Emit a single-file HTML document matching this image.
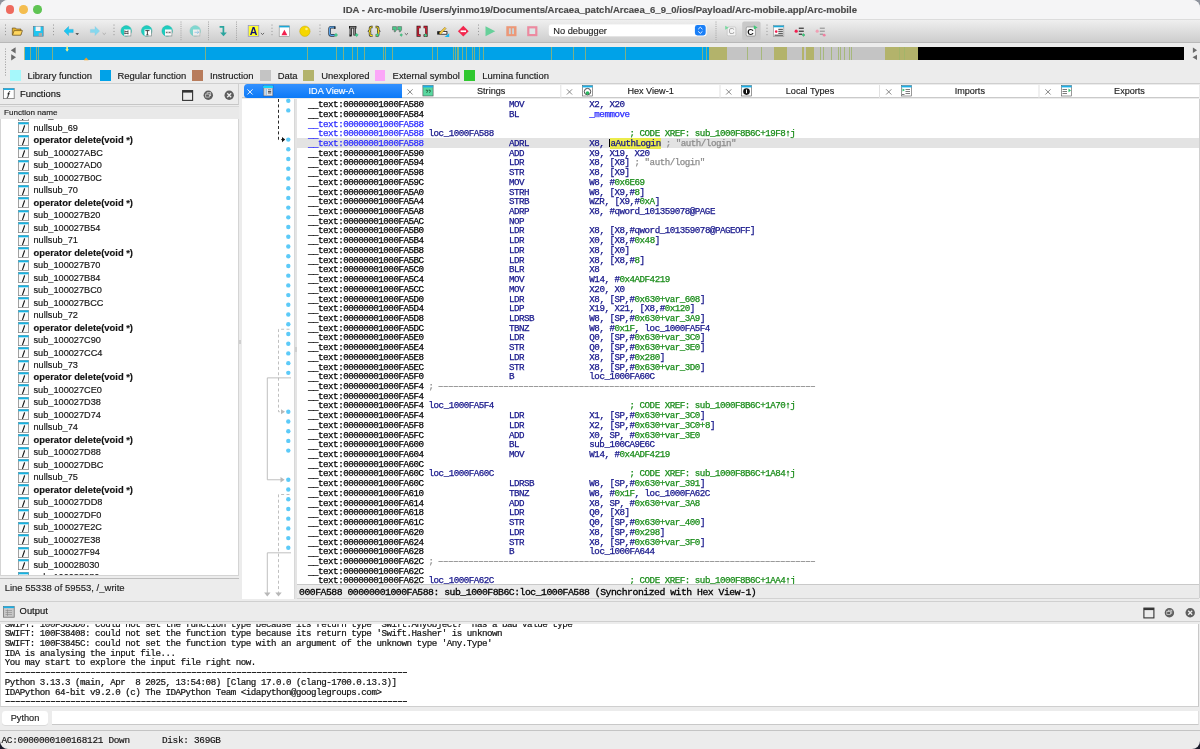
<!DOCTYPE html><html><head><meta charset="utf-8"><style>
*{box-sizing:border-box}
html,body{margin:0;padding:0;width:1200px;height:749px;overflow:hidden;background:linear-gradient(#8e939c 0,#8e939c 50%,#1b1b2b 50%)}
#win{-webkit-text-stroke:0.15px currentColor;will-change:transform;position:absolute;left:0;top:0;width:1200px;height:749px;background:#ececec;border-radius:8px;overflow:hidden;font-family:"Liberation Sans",sans-serif}
.abs{position:absolute}
.cr{position:absolute;left:297px;width:902px;height:9.72px;line-height:9.72px;padding-left:11px;padding-top:1px;font-family:"Liberation Mono",monospace;font-size:9.2px;letter-spacing:-0.49px;white-space:pre;color:#000;-webkit-text-stroke:0.25px currentColor}
.hlb{position:absolute;left:297px;width:902px;height:9.72px;background:#e3e3e3}
.us{position:relative;top:1.3px}
.dash{position:absolute}
.odash{position:absolute;left:4.0px}
.yl{background:#ecec4c}
.cur{display:inline-block;width:0;border-left:1.2px solid #000;height:8.5px;vertical-align:-1.5px;margin-left:0px}
.fr{position:absolute;left:1px;width:237px;height:12.49px}
.fi{position:absolute;left:16.3px;top:1.3px;width:11px;height:11px;line-height:0}
.ft{position:absolute;left:31.5px;top:0.8px;line-height:12.49px;font-size:9.2px;color:#111;white-space:pre}
.ft.b{font-weight:bold;font-size:9.4px}
.tab{position:absolute;top:85px;height:13.5px;font-size:9px;line-height:13.5px;color:#222}
.mono{font-family:"Liberation Mono",monospace}
.ol{position:absolute;left:3.7px;-webkit-text-stroke:0.2px currentColor;height:9.72px;line-height:9.72px;font-family:"Liberation Mono",monospace;font-size:9.2px;letter-spacing:-0.49px;white-space:pre;color:#111}
</style></head><body><div id="win">

<div class="abs" style="left:0;top:0;width:1200px;height:19.5px;background:#f5f5f6;border-bottom:1px solid #dcdcdc"></div>
<div class="abs" style="left:5.5px;top:5.3px;width:8.6px;height:8.6px;border-radius:50%;background:#ee6a5e"></div>
<div class="abs" style="left:19.2px;top:5.3px;width:8.6px;height:8.6px;border-radius:50%;background:#f4bd4f"></div>
<div class="abs" style="left:33.2px;top:5.3px;width:8.6px;height:8.6px;border-radius:50%;background:#5fc453"></div>
<div class="abs" style="left:0;top:3px;width:1200px;text-align:center;font-weight:bold;font-size:9.55px;line-height:13px;color:#4a4a4a;padding-left:0px">IDA - Arc-mobile /Users/yinmo19/Documents/Arcaea_patch/Arcaea_6_9_0/ios/Payload/Arc-mobile.app/Arc-mobile</div>

<div class="abs" style="left:0;top:19.5px;width:1200px;height:23.3px;background:linear-gradient(#efefef,#cdcdcd);border-bottom:1px solid #b8b8b8"></div>
<div style="position:absolute;left:24.5px;top:46.7px;width:684.25px;height:13.5px;background:#00a2e8"></div>
<div style="position:absolute;left:708.75px;top:46.7px;width:18.25px;height:13.5px;background:#b3b36b"></div>
<div style="position:absolute;left:727px;top:46.7px;width:47.00px;height:13.5px;background:#c4c4c4"></div>
<div style="position:absolute;left:774px;top:46.7px;width:13.00px;height:13.5px;background:#b3b36b"></div>
<div style="position:absolute;left:787px;top:46.7px;width:15.00px;height:13.5px;background:#c4c4c4"></div>
<div style="position:absolute;left:802px;top:46.7px;width:1.50px;height:13.5px;background:#b3b36b"></div>
<div style="position:absolute;left:803.5px;top:46.7px;width:2.50px;height:13.5px;background:#c4c4c4"></div>
<div style="position:absolute;left:806px;top:46.7px;width:8.00px;height:13.5px;background:#b3b36b"></div>
<div style="position:absolute;left:814px;top:46.7px;width:71.00px;height:13.5px;background:#c4c4c4"></div>
<div style="position:absolute;left:885px;top:46.7px;width:32.50px;height:13.5px;background:#b3b36b"></div>
<div style="position:absolute;left:917.5px;top:46.7px;width:266.50px;height:13.5px;background:#000"></div>
<div style="position:absolute;left:24.0px;top:46.7px;width:1px;height:13.5px;background:#9fb56a;opacity:.8"></div>
<div style="position:absolute;left:30.0px;top:46.7px;width:1px;height:13.5px;background:#9fb56a;opacity:.8"></div>
<div style="position:absolute;left:36.0px;top:46.7px;width:1px;height:13.5px;background:#9fb56a;opacity:.8"></div>
<div style="position:absolute;left:38.0px;top:46.7px;width:1px;height:13.5px;background:#9fb56a;opacity:.8"></div>
<div style="position:absolute;left:52.0px;top:46.7px;width:1px;height:13.5px;background:#9fb56a;opacity:.8"></div>
<div style="position:absolute;left:205.0px;top:46.7px;width:1px;height:13.5px;background:#9fb56a;opacity:.8"></div>
<div style="position:absolute;left:307.0px;top:46.7px;width:1px;height:13.5px;background:#9fb56a;opacity:.8"></div>
<div style="position:absolute;left:335.5px;top:46.7px;width:1px;height:13.5px;background:#9fb56a;opacity:.8"></div>
<div style="position:absolute;left:342.5px;top:46.7px;width:1px;height:13.5px;background:#9fb56a;opacity:.8"></div>
<div style="position:absolute;left:351.5px;top:46.7px;width:1px;height:13.5px;background:#9fb56a;opacity:.8"></div>
<div style="position:absolute;left:356.5px;top:46.7px;width:1px;height:13.5px;background:#9fb56a;opacity:.8"></div>
<div style="position:absolute;left:364.0px;top:46.7px;width:1px;height:13.5px;background:#9fb56a;opacity:.8"></div>
<div style="position:absolute;left:383.0px;top:46.7px;width:1px;height:13.5px;background:#9fb56a;opacity:.8"></div>
<div style="position:absolute;left:385.0px;top:46.7px;width:1px;height:13.5px;background:#9fb56a;opacity:.8"></div>
<div style="position:absolute;left:392.0px;top:46.7px;width:1px;height:13.5px;background:#9fb56a;opacity:.8"></div>
<div style="position:absolute;left:432.0px;top:46.7px;width:1px;height:13.5px;background:#9fb56a;opacity:.8"></div>
<div style="position:absolute;left:437.0px;top:46.7px;width:1px;height:13.5px;background:#9fb56a;opacity:.8"></div>
<div style="position:absolute;left:452.5px;top:46.7px;width:1px;height:13.5px;background:#9fb56a;opacity:.8"></div>
<div style="position:absolute;left:454.5px;top:46.7px;width:1px;height:13.5px;background:#9fb56a;opacity:.8"></div>
<div style="position:absolute;left:456.5px;top:46.7px;width:1px;height:13.5px;background:#9fb56a;opacity:.8"></div>
<div style="position:absolute;left:457.5px;top:46.7px;width:1px;height:13.5px;background:#9fb56a;opacity:.8"></div>
<div style="position:absolute;left:462.0px;top:46.7px;width:1px;height:13.5px;background:#9fb56a;opacity:.8"></div>
<div style="position:absolute;left:465.5px;top:46.7px;width:1px;height:13.5px;background:#9fb56a;opacity:.8"></div>
<div style="position:absolute;left:471.5px;top:46.7px;width:1px;height:13.5px;background:#9fb56a;opacity:.8"></div>
<div style="position:absolute;left:473.5px;top:46.7px;width:1px;height:13.5px;background:#9fb56a;opacity:.8"></div>
<div style="position:absolute;left:479.0px;top:46.7px;width:1px;height:13.5px;background:#9fb56a;opacity:.8"></div>
<div style="position:absolute;left:482.5px;top:46.7px;width:1px;height:13.5px;background:#9fb56a;opacity:.8"></div>
<div style="position:absolute;left:551.0px;top:46.7px;width:1px;height:13.5px;background:#9fb56a;opacity:.8"></div>
<div style="position:absolute;left:572.5px;top:46.7px;width:1px;height:13.5px;background:#9fb56a;opacity:.8"></div>
<div style="position:absolute;left:585.0px;top:46.7px;width:1px;height:13.5px;background:#9fb56a;opacity:.8"></div>
<div style="position:absolute;left:625.0px;top:46.7px;width:1px;height:13.5px;background:#9fb56a;opacity:.8"></div>
<div style="position:absolute;left:702.0px;top:46.7px;width:1px;height:13.5px;background:#9fb56a;opacity:.8"></div>
<div style="position:absolute;left:705.5px;top:46.7px;width:1px;height:13.5px;background:#9fb56a;opacity:.8"></div>
<div style="position:absolute;left:747.0px;top:46.7px;width:1px;height:13.5px;background:#9fb56a;opacity:.8"></div>
<div style="position:absolute;left:761.0px;top:46.7px;width:1px;height:13.5px;background:#9fb56a;opacity:.8"></div>
<div style="position:absolute;left:819.5px;top:46.7px;width:1px;height:13.5px;background:#9fb56a;opacity:.8"></div>
<div style="position:absolute;left:822.5px;top:46.7px;width:1px;height:13.5px;background:#9fb56a;opacity:.8"></div>
<div style="position:absolute;left:830.5px;top:46.7px;width:1px;height:13.5px;background:#9fb56a;opacity:.8"></div>
<div style="position:absolute;left:837.5px;top:46.7px;width:1px;height:13.5px;background:#9fb56a;opacity:.8"></div>
<div style="position:absolute;left:840.0px;top:46.7px;width:1px;height:13.5px;background:#9fb56a;opacity:.8"></div>
<div style="position:absolute;left:843.5px;top:46.7px;width:1px;height:13.5px;background:#9fb56a;opacity:.8"></div>
<div style="position:absolute;left:848.5px;top:46.7px;width:1px;height:13.5px;background:#9fb56a;opacity:.8"></div>
<div style="position:absolute;left:850.5px;top:46.7px;width:1px;height:13.5px;background:#9fb56a;opacity:.8"></div>
<div style="position:absolute;left:898.5px;top:46.7px;width:1px;height:13.5px;background:#9fb56a;opacity:.8"></div>
<div style="position:absolute;left:903.5px;top:46.7px;width:1px;height:13.5px;background:#9fb56a;opacity:.8"></div>
<svg class="abs" style="left:0;top:0" width="1200" height="90" viewBox="0 0 1200 90"><rect x="5.0" y="24.50" width="1" height="1.1" fill="#9a9a9a"/><rect x="5.0" y="27.70" width="1" height="1.1" fill="#9a9a9a"/><rect x="5.0" y="30.90" width="1" height="1.1" fill="#9a9a9a"/><rect x="5.0" y="34.10" width="1" height="1.1" fill="#9a9a9a"/><rect x="53.0" y="24.50" width="1" height="1.1" fill="#9a9a9a"/><rect x="53.0" y="27.70" width="1" height="1.1" fill="#9a9a9a"/><rect x="53.0" y="30.90" width="1" height="1.1" fill="#9a9a9a"/><rect x="53.0" y="34.10" width="1" height="1.1" fill="#9a9a9a"/><rect x="113.5" y="24.50" width="1" height="1.1" fill="#9a9a9a"/><rect x="113.5" y="27.70" width="1" height="1.1" fill="#9a9a9a"/><rect x="113.5" y="30.90" width="1" height="1.1" fill="#9a9a9a"/><rect x="113.5" y="34.10" width="1" height="1.1" fill="#9a9a9a"/><rect x="271.5" y="24.50" width="1" height="1.1" fill="#9a9a9a"/><rect x="271.5" y="27.70" width="1" height="1.1" fill="#9a9a9a"/><rect x="271.5" y="30.90" width="1" height="1.1" fill="#9a9a9a"/><rect x="271.5" y="34.10" width="1" height="1.1" fill="#9a9a9a"/><rect x="319.5" y="24.50" width="1" height="1.1" fill="#9a9a9a"/><rect x="319.5" y="27.70" width="1" height="1.1" fill="#9a9a9a"/><rect x="319.5" y="30.90" width="1" height="1.1" fill="#9a9a9a"/><rect x="319.5" y="34.10" width="1" height="1.1" fill="#9a9a9a"/><rect x="478.0" y="24.50" width="1" height="1.1" fill="#9a9a9a"/><rect x="478.0" y="27.70" width="1" height="1.1" fill="#9a9a9a"/><rect x="478.0" y="30.90" width="1" height="1.1" fill="#9a9a9a"/><rect x="478.0" y="34.10" width="1" height="1.1" fill="#9a9a9a"/><rect x="766.5" y="24.50" width="1" height="1.1" fill="#9a9a9a"/><rect x="766.5" y="27.70" width="1" height="1.1" fill="#9a9a9a"/><rect x="766.5" y="30.90" width="1" height="1.1" fill="#9a9a9a"/><rect x="766.5" y="34.10" width="1" height="1.1" fill="#9a9a9a"/><rect x="180.5" y="21.50" width="1" height="1.1" fill="#a8a8a8"/><rect x="180.5" y="23.70" width="1" height="1.1" fill="#a8a8a8"/><rect x="180.5" y="25.90" width="1" height="1.1" fill="#a8a8a8"/><rect x="180.5" y="28.10" width="1" height="1.1" fill="#a8a8a8"/><rect x="180.5" y="30.30" width="1" height="1.1" fill="#a8a8a8"/><rect x="180.5" y="32.50" width="1" height="1.1" fill="#a8a8a8"/><rect x="180.5" y="34.70" width="1" height="1.1" fill="#a8a8a8"/><rect x="180.5" y="36.90" width="1" height="1.1" fill="#a8a8a8"/><rect x="180.5" y="39.10" width="1" height="1.1" fill="#a8a8a8"/><rect x="208.0" y="21.50" width="1" height="1.1" fill="#a8a8a8"/><rect x="208.0" y="23.70" width="1" height="1.1" fill="#a8a8a8"/><rect x="208.0" y="25.90" width="1" height="1.1" fill="#a8a8a8"/><rect x="208.0" y="28.10" width="1" height="1.1" fill="#a8a8a8"/><rect x="208.0" y="30.30" width="1" height="1.1" fill="#a8a8a8"/><rect x="208.0" y="32.50" width="1" height="1.1" fill="#a8a8a8"/><rect x="208.0" y="34.70" width="1" height="1.1" fill="#a8a8a8"/><rect x="208.0" y="36.90" width="1" height="1.1" fill="#a8a8a8"/><rect x="208.0" y="39.10" width="1" height="1.1" fill="#a8a8a8"/><rect x="236.0" y="21.50" width="1" height="1.1" fill="#a8a8a8"/><rect x="236.0" y="23.70" width="1" height="1.1" fill="#a8a8a8"/><rect x="236.0" y="25.90" width="1" height="1.1" fill="#a8a8a8"/><rect x="236.0" y="28.10" width="1" height="1.1" fill="#a8a8a8"/><rect x="236.0" y="30.30" width="1" height="1.1" fill="#a8a8a8"/><rect x="236.0" y="32.50" width="1" height="1.1" fill="#a8a8a8"/><rect x="236.0" y="34.70" width="1" height="1.1" fill="#a8a8a8"/><rect x="236.0" y="36.90" width="1" height="1.1" fill="#a8a8a8"/><rect x="236.0" y="39.10" width="1" height="1.1" fill="#a8a8a8"/><rect x="715.5" y="21.50" width="1" height="1.1" fill="#a8a8a8"/><rect x="715.5" y="23.70" width="1" height="1.1" fill="#a8a8a8"/><rect x="715.5" y="25.90" width="1" height="1.1" fill="#a8a8a8"/><rect x="715.5" y="28.10" width="1" height="1.1" fill="#a8a8a8"/><rect x="715.5" y="30.30" width="1" height="1.1" fill="#a8a8a8"/><rect x="715.5" y="32.50" width="1" height="1.1" fill="#a8a8a8"/><rect x="715.5" y="34.70" width="1" height="1.1" fill="#a8a8a8"/><rect x="715.5" y="36.90" width="1" height="1.1" fill="#a8a8a8"/><rect x="715.5" y="39.10" width="1" height="1.1" fill="#a8a8a8"/><path d="M12.3 28.0 h3.2 l0.9 1.0 h4.6 v5.8 h-8.7z" fill="#e2b031" stroke="#5a4210" stroke-width="0.6"/><path d="M12.5 35.2 l1.7 -4.6 h8.3 l-1.8 4.6z" fill="#ffd65e" stroke="#5a4210" stroke-width="0.6"/><rect x="33.3" y="26.3" width="9.9" height="9.9" fill="#1fc6f1" stroke="#667788" stroke-width="0.6"/><rect x="35.6" y="26.6" width="5.0" height="4.4" fill="#f4f4f4"/><rect x="38.7" y="32.9" width="3.4" height="3.0" fill="#a9a9a9"/><path d="M64 31 L68.6 26.4 V29.4 H73.2 V32.6 H68.6 V35.6z" fill="#1cc6f3" stroke="#20a8d0" stroke-width="0.4"/><path d="M75.4 33.2 L79.0 33.2 L77.2 35.0z" fill="#333"/><path d="M99.6 31 L95 26.4 V29.4 H90.4 V32.6 H95 V35.6z" fill="#86d8ee" stroke="#7cc8e0" stroke-width="0.3"/><path d="M102.60000000000001 33 L104.2 34.5 L105.8 33" fill="none" stroke="#9a9a9a" stroke-width="0.7"/><g opacity="1.0"><circle cx="126.2" cy="30.9" r="5.3" fill="#1ecdbf" stroke="#17a89c" stroke-width="0.4"/><rect x="124.6" y="30.1" width="6.6" height="6.2" fill="#7a8a88"/><rect x="124.0" y="29.5" width="6.6" height="6.1" fill="#fff"/><path d="M124.8 30.4 v4.4 M128 30.4 v4.4" stroke="#333" stroke-width="0.8" stroke-dasharray="0.9 0.5"/><path d="M124.5 31.6 h3.8 M124.5 33.4 h3.8" stroke="#333" stroke-width="0.8"/></g><g opacity="1.0"><circle cx="146.7" cy="30.9" r="5.3" fill="#1ecdbf" stroke="#17a89c" stroke-width="0.4"/><rect x="145.1" y="30.1" width="6.6" height="6.2" fill="#7a8a88"/><rect x="144.5" y="29.5" width="6.6" height="6.1" fill="#fff"/><path d="M145.3 30.6 h4.2 M147.4 30.6 v4.2 M146.4 34.8 h2" stroke="#333" stroke-width="0.9"/></g><g opacity="1.0"><circle cx="167.2" cy="30.9" r="5.3" fill="#1ecdbf" stroke="#17a89c" stroke-width="0.4"/><rect x="165.6" y="30.1" width="6.6" height="6.2" fill="#7a8a88"/><rect x="165.0" y="29.5" width="6.6" height="6.1" fill="#fff"/><path d="M165.5 31.3 h5.6 M165.5 33.6 h5.6" stroke="#ccc" stroke-width="0.6"/><path d="M165.8 32.4 h1.8 M168.5 32.4 h2.2" stroke="#555" stroke-width="0.9"/></g><g opacity="0.5"><circle cx="195.2" cy="30.9" r="5.3" fill="#1ecdbf" stroke="#17a89c" stroke-width="0.4"/><rect x="193.6" y="30.1" width="6.6" height="6.2" fill="#7a8a88"/><rect x="193.0" y="29.5" width="6.6" height="6.1" fill="#fff"/><path d="M194.5 32.3 h4.5 M197.2 30.8 l1.6 1.5 l-1.6 1.5" stroke="#3aa8e8" stroke-width="0.8" fill="none"/></g><path d="M219.6 26.9 H223.4 V33" fill="none" stroke="#2aa59e" stroke-width="1.7"/><path d="M220.2 32.4 H226.8 L223.5 36.3z" fill="#2aa59e"/><rect x="248.2" y="25.4" width="10.6" height="10.9" fill="#ffff2e" stroke="#8a8ad8" stroke-width="0.7"/><text x="253.5" y="34.6" font-family="Liberation Sans" font-weight="bold" font-size="10.5" text-anchor="middle" fill="#10107a">A</text><path d="M260.9 33 L262.5 34.5 L264.1 33" fill="none" stroke="#333" stroke-width="0.7"/><rect x="279.2" y="25.8" width="10.3" height="10.6" fill="#fff" stroke="#8a8a8a" stroke-width="0.6"/><rect x="279.2" y="25.8" width="10.3" height="1.6" fill="#1aa8d8"/><path d="M281.4 35.2 L287.4 35.2 L284.4 29.8z" fill="#f2204e"/><circle cx="304.9" cy="31.2" r="5.2" fill="#f6d700" stroke="#b89a00" stroke-width="0.4"/><circle cx="306.5" cy="29" r="1.3" fill="#fff6a0" opacity="0.8"/><path d="M335.2 27.2 H331.2 Q329.6 27.2 329.6 28.8 V33.8 Q329.6 35.4 331.2 35.4 H334.6" fill="none" stroke="#24303c" stroke-width="2.6"/><path d="M335.2 27.2 H331.2 Q329.6 27.2 329.6 28.8 V33.8 Q329.6 35.4 331.2 35.4 H334.6" fill="none" stroke="#58a4ec" stroke-width="1.3"/><path d="M334.8 26.6 V29" stroke="#24303c" stroke-width="1.4"/><path d="M336.0 33.3 L337.7 35.0 L336.0 36.7 L334.3 35.0z" fill="#40d090" stroke="#208a50" stroke-width="0.3"/><path d="M349 27.2 H356.4 M350.8 27.2 V35.4 M354.6 27.2 V35.4 M349.4 35.4 H351.6" fill="none" stroke="#1a1a1a" stroke-width="2.4"/><path d="M350 27.2 H355.6 M350.8 27.8 V34.8 M354.6 27.8 V34.8" fill="none" stroke="#9a9a9a" stroke-width="1.0"/><path d="M356.6 33.3 L358.3 35.0 L356.6 36.7 L354.90000000000003 35.0z" fill="#40d090" stroke="#208a50" stroke-width="0.3"/><path d="M372.6 27 H371.2 Q370 27 370 28.4 V30.4 L369.2 31.2 L370 32 V34.2 Q370 35.6 371.2 35.6 H372.6 M375.6 27 H377 Q378.2 27 378.2 28.4 V30.4 L379 31.2 L378.2 32 V34.2 Q378.2 35.6 377 35.6 H375.6" fill="none" stroke="#2a2a3a" stroke-width="2.4"/><path d="M372.6 27 H371.2 Q370 27 370 28.4 V30.4 L369.2 31.2 L370 32 V34.2 Q370 35.6 371.2 35.6 H372.6 M375.6 27 H377 Q378.2 27 378.2 28.4 V30.4 L379 31.2 L378.2 32 V34.2 Q378.2 35.6 377 35.6 H375.6" fill="none" stroke="#f4dc18" stroke-width="1.2"/><path d="M377.4 33.3 L379.09999999999997 35.0 L377.4 36.7 L375.7 35.0z" fill="#40d090" stroke="#208a50" stroke-width="0.3"/><path d="M392.5 26.6 h4 v3.4 l-1.2 1.8 h-1.3 l0.8 -1.8 h-2.3z M397.6 26.6 h4 v3.4 l-1.2 1.8 h-1.3 l0.8 -1.8 h-2.3z" fill="#48c888" stroke="#555" stroke-width="0.5"/><path d="M401.2 33.6 L402.59999999999997 35.0 L401.2 36.4 L399.8 35.0z" fill="#48c888" stroke="#1a8a4a" stroke-width="0.3"/><path d="M404.79999999999995 33.2 L406.4 34.7 L408.0 33.2" fill="none" stroke="#333" stroke-width="0.7"/><path d="M420.6 27 H417.8 V35.6 H420.6 M423.6 27 H426.4 V35.6 H423.6" fill="none" stroke="#3a1a1a" stroke-width="2.5"/><path d="M420.4 27.1 H418 V35.5 H420.4 M423.8 27.1 H426.2 V35.5 H423.8" fill="none" stroke="#e0203a" stroke-width="1.2"/><path d="M425.6 33.6 L427.20000000000005 35.2 L425.6 36.800000000000004 L424.0 35.2z" fill="#40d090" stroke="#208a50" stroke-width="0.3"/><rect x="437.2" y="31.2" width="10.2" height="3.4" fill="#1a1a1a"/><rect x="440.5" y="32" width="6" height="1.8" fill="#fff"/><path d="M439 33 L444.8 27.2 L446.2 28.6 L440.4 34.4z" fill="#f0c840" stroke="#7a6020" stroke-width="0.4"/><path d="M444.6 37 L449.2 33.2 V37z" fill="#18b8f0"/><path d="M463.3 25.8 L468.7 31.2 L463.3 36.6 L457.9 31.2z" fill="#f2284e"/><rect x="460.6" y="30.4" width="5.4" height="1.7" fill="#fff"/><path d="M485.5 26.2 L495.2 31.2 L485.5 36.2z" fill="#66d09a"/><rect x="506.3" y="26.2" width="10.2" height="10" fill="#ec9878"/><rect x="508.9" y="28.3" width="1.9" height="5.8" fill="#c8d4d8"/><rect x="512.1" y="28.3" width="1.9" height="5.8" fill="#c8d4d8"/><rect x="527.2" y="26.2" width="10.2" height="10" fill="#ec8aa0"/><rect x="529.4" y="28.4" width="5.8" height="5.6" fill="#dde6e6"/><rect x="548.7" y="24.4" width="158" height="12.6" rx="3" fill="#c0c0c0" opacity="0.6"/><rect x="548.7" y="24.2" width="158" height="12.4" rx="3" fill="#fff"/><rect x="694.9" y="25" width="10.8" height="10.4" rx="2.4" fill="#1a7ff7"/><path d="M698.2 29.2 L700.3 27.2 L702.4 29.2 M698.2 31.4 L700.3 33.4 L702.4 31.4" fill="none" stroke="#fff" stroke-width="0.9"/><text x="553.2" y="33.8" font-family="Liberation Sans" font-size="9.3" fill="#222" stroke="#222" stroke-width="0.12">No debugger</text><rect x="727.2" y="27" width="8.6" height="8.8" rx="1" fill="#f4f4f4" stroke="#b8b8b8" stroke-width="0.6"/><text x="731.6" y="34.4" font-family="Liberation Sans" font-size="8.5" text-anchor="middle" fill="#9a9a9a">C</text><path d="M725.2 25.8 L728.8 27.8 L725.2 29.8z" fill="#7ad8a0"/><rect x="742.2" y="21.6" width="18.4" height="18.6" rx="2" fill="#c9c9c9"/><rect x="746.2" y="27" width="9.2" height="9" rx="1" fill="#fafafa" stroke="#777" stroke-width="0.6"/><text x="750.6" y="34.6" font-family="Liberation Sans" font-weight="bold" font-size="9" text-anchor="middle" fill="#111">C</text><path d="M753.8 25.2 L757.6 27.4 L753.8 29.6z" fill="#40c878"/><rect x="773.4" y="25.6" width="10.4" height="10.8" fill="#fff" stroke="#888" stroke-width="0.6"/><rect x="773.4" y="25.6" width="10.4" height="1.7" fill="#1aa8d8"/><circle cx="776.2" cy="31.6" r="1.3" fill="#f02050"/><path d="M778.3 29.3 h4.6 M778.3 31.3 h4.6 M778.3 33.3 h4.6 M774.5 35.2 h8.5" stroke="#222" stroke-width="0.9"/><circle cx="796.2" cy="31.2" r="1.6" fill="#f02050"/><path d="M798.8 28.2 h5 M798.8 31.2 h5 M798.8 34.2 h3.4" stroke="#111" stroke-width="1.0"/><path d="M803.5 33.5 L805.0 35.0 L803.5 36.5 L802.0 35.0z" fill="#38c878" stroke="#1a8a4a" stroke-width="0.3"/><circle cx="817.2" cy="31.2" r="1.6" fill="#f0a0b4"/><path d="M819.8 28.2 h5 M819.8 31.2 h5 M819.8 34.2 h3.4" stroke="#8a8a8a" stroke-width="1.0"/><circle cx="824.2" cy="35.2" r="1.4" fill="#f080a0"/><path d="M10.8 50.3 L15.6 47.2 V53.4z" fill="#6a6a6a"/><path d="M16 57.3 L11.2 54.2 V60.4z" fill="#6a6a6a"/><path d="M1197.1 50.3 L1192.9 47.6 V53z" fill="#6a6a6a"/><path d="M1192.5 57.3 L1197 54.7 V59.9z" fill="#6a6a6a"/><rect x="5.0" y="48.50" width="1" height="1.1" fill="#a0a0a0"/><rect x="5.0" y="51.10" width="1" height="1.1" fill="#a0a0a0"/><rect x="5.0" y="53.70" width="1" height="1.1" fill="#a0a0a0"/><rect x="5.0" y="56.30" width="1" height="1.1" fill="#a0a0a0"/><rect x="5.0" y="58.90" width="1" height="1.1" fill="#a0a0a0"/><rect x="5.0" y="61.50" width="1" height="1.1" fill="#a0a0a0"/><rect x="5.0" y="64.10" width="1" height="1.1" fill="#a0a0a0"/><rect x="5.0" y="66.70" width="1" height="1.1" fill="#a0a0a0"/><rect x="5.0" y="69.30" width="1" height="1.1" fill="#a0a0a0"/><rect x="5.0" y="71.90" width="1" height="1.1" fill="#a0a0a0"/><rect x="5.0" y="74.50" width="1" height="1.1" fill="#a0a0a0"/><path d="M66.3 46.4 h1.6 v2.8 h1 l-1.8 2.6 l-1.8 -2.6 h1z" fill="#f0f080"/><path d="M83.8 60.2 L86.2 57.4 L88.6 60.2z" fill="#f0a020"/></svg>
<div class="abs" style="left:10px;top:70px;width:11.0px;height:11px;background:#a6f8fb"></div>
<div class="abs" style="left:27.5px;top:69px;font-size:9.45px;line-height:13px;color:#1a1a1a;white-space:pre">Library function</div>
<div class="abs" style="left:99.5px;top:70px;width:11.0px;height:11px;background:#00a2e8"></div>
<div class="abs" style="left:117.5px;top:69px;font-size:9.45px;line-height:13px;color:#1a1a1a;white-space:pre">Regular function</div>
<div class="abs" style="left:191.5px;top:70px;width:11.5px;height:11px;background:#b87c5c"></div>
<div class="abs" style="left:210px;top:69px;font-size:9.45px;line-height:13px;color:#1a1a1a;white-space:pre">Instruction</div>
<div class="abs" style="left:259.7px;top:70px;width:11.0px;height:11px;background:#c4c4c4"></div>
<div class="abs" style="left:277.7px;top:69px;font-size:9.45px;line-height:13px;color:#1a1a1a;white-space:pre">Data</div>
<div class="abs" style="left:303.3px;top:70px;width:10.5px;height:11px;background:#b3b36b"></div>
<div class="abs" style="left:321.3px;top:69px;font-size:9.45px;line-height:13px;color:#1a1a1a;white-space:pre">Unexplored</div>
<div class="abs" style="left:375px;top:70px;width:10.4px;height:11px;background:#fba6f8"></div>
<div class="abs" style="left:392.6px;top:69px;font-size:9.45px;line-height:13px;color:#1a1a1a;white-space:pre">External symbol</div>
<div class="abs" style="left:464px;top:70px;width:10.6px;height:11px;background:#30c830"></div>
<div class="abs" style="left:482.3px;top:69px;font-size:9.45px;line-height:13px;color:#1a1a1a;white-space:pre">Lumina function</div>
<div class="abs" style="left:0;top:83px;width:1200px;height:1px;background:#cfcfcf"></div>
<div class="abs" style="left:0;top:84px;width:239.3px;height:20.7px;background:#ececec;border-bottom:1px solid #c6c6c6;border-right:1px solid #cfcfcf"></div>
<svg class="abs" style="left:3px;top:88.3px" width="12" height="11" viewBox="0 0 12 11"><rect x="0.4" y="0.4" width="10.8" height="10.2" fill="#fff" stroke="#777" stroke-width="0.8"/><rect x="0.4" y="0.4" width="10.8" height="1.6" fill="#1ab0e8"/><path d="M7.2 3.6 C6.2 3.3 5.9 4 5.7 5 L4.9 9.0 C4.7 9.7 4.3 9.8 3.8 9.7 M4.5 5.8 L6.8 5.8" fill="none" stroke="#111" stroke-width="0.9"/></svg>
<div class="abs" style="left:20px;top:88.2px;font-size:9.4px;line-height:12px;color:#111">Functions</div>
<svg class="abs" style="left:0;top:0" width="240" height="105"><rect x="182.6" y="90.6" width="10" height="9.8" fill="none" stroke="#333" stroke-width="1.1"/><rect x="182.6" y="90.6" width="10" height="2" fill="#333"/><circle cx="208.3" cy="95.3" r="4.7" fill="#5e5e5e"/><rect x="207.10000000000002" y="92.7" width="3.6" height="3" fill="none" stroke="#ddd" stroke-width="0.7"/><rect x="205.70000000000002" y="94.1" width="3.6" height="3" fill="#5e5e5e" stroke="#ddd" stroke-width="0.7"/><circle cx="229.2" cy="95.3" r="4.7" fill="#5e5e5e"/><path d="M227.2 93.3 L231.2 97.3 M231.2 93.3 L227.2 97.3" stroke="#eee" stroke-width="1.3"/></svg>
<div class="abs" style="left:0;top:105.5px;width:238.5px;height:13px;background:#e9e9e9;border-top:1px solid #d6d6d6"></div>
<div class="abs" style="left:4px;top:106.8px;font-size:8.1px;line-height:11px;color:#222">Function name</div>
<div class="abs" style="left:0;top:118.5px;width:238.5px;height:457px;background:#fff;overflow:hidden;border-left:1px solid #d4d4d4;border-right:1px solid #d4d4d4">
<div class="fr" style="top:-10.09px"><span class="fi"><svg width="11" height="11" viewBox="0 0 11 11"><rect x="0.4" y="0.4" width="10.2" height="10.2" fill="#fafafa" stroke="#8a8a8a" stroke-width="0.8"/><rect x="0.4" y="0.4" width="10.2" height="1.9" fill="#14b4e4"/><path d="M6.6 3.3 C6.3 4.5 5.6 6.6 5.2 7.6 C4.9 8.5 4.6 9.4 4.4 9.9" fill="none" stroke="#111" stroke-width="1.15"/></svg></span><span class="ft">sub_100027AA8</span></div>
<div class="fr" style="top:2.40px"><span class="fi"><svg width="11" height="11" viewBox="0 0 11 11"><rect x="0.4" y="0.4" width="10.2" height="10.2" fill="#fafafa" stroke="#8a8a8a" stroke-width="0.8"/><rect x="0.4" y="0.4" width="10.2" height="1.9" fill="#14b4e4"/><path d="M6.6 3.3 C6.3 4.5 5.6 6.6 5.2 7.6 C4.9 8.5 4.6 9.4 4.4 9.9" fill="none" stroke="#111" stroke-width="1.15"/></svg></span><span class="ft">nullsub_69</span></div>
<div class="fr" style="top:14.89px"><span class="fi"><svg width="11" height="11" viewBox="0 0 11 11"><rect x="0.4" y="0.4" width="10.2" height="10.2" fill="#fafafa" stroke="#8a8a8a" stroke-width="0.8"/><rect x="0.4" y="0.4" width="10.2" height="1.9" fill="#14b4e4"/><path d="M6.6 3.3 C6.3 4.5 5.6 6.6 5.2 7.6 C4.9 8.5 4.6 9.4 4.4 9.9" fill="none" stroke="#111" stroke-width="1.15"/></svg></span><span class="ft b">operator delete(void *)</span></div>
<div class="fr" style="top:27.38px"><span class="fi"><svg width="11" height="11" viewBox="0 0 11 11"><rect x="0.4" y="0.4" width="10.2" height="10.2" fill="#fafafa" stroke="#8a8a8a" stroke-width="0.8"/><rect x="0.4" y="0.4" width="10.2" height="1.9" fill="#14b4e4"/><path d="M6.6 3.3 C6.3 4.5 5.6 6.6 5.2 7.6 C4.9 8.5 4.6 9.4 4.4 9.9" fill="none" stroke="#111" stroke-width="1.15"/></svg></span><span class="ft">sub_100027ABC</span></div>
<div class="fr" style="top:39.87px"><span class="fi"><svg width="11" height="11" viewBox="0 0 11 11"><rect x="0.4" y="0.4" width="10.2" height="10.2" fill="#fafafa" stroke="#8a8a8a" stroke-width="0.8"/><rect x="0.4" y="0.4" width="10.2" height="1.9" fill="#14b4e4"/><path d="M6.6 3.3 C6.3 4.5 5.6 6.6 5.2 7.6 C4.9 8.5 4.6 9.4 4.4 9.9" fill="none" stroke="#111" stroke-width="1.15"/></svg></span><span class="ft">sub_100027AD0</span></div>
<div class="fr" style="top:52.36px"><span class="fi"><svg width="11" height="11" viewBox="0 0 11 11"><rect x="0.4" y="0.4" width="10.2" height="10.2" fill="#fafafa" stroke="#8a8a8a" stroke-width="0.8"/><rect x="0.4" y="0.4" width="10.2" height="1.9" fill="#14b4e4"/><path d="M6.6 3.3 C6.3 4.5 5.6 6.6 5.2 7.6 C4.9 8.5 4.6 9.4 4.4 9.9" fill="none" stroke="#111" stroke-width="1.15"/></svg></span><span class="ft">sub_100027B0C</span></div>
<div class="fr" style="top:64.85px"><span class="fi"><svg width="11" height="11" viewBox="0 0 11 11"><rect x="0.4" y="0.4" width="10.2" height="10.2" fill="#fafafa" stroke="#8a8a8a" stroke-width="0.8"/><rect x="0.4" y="0.4" width="10.2" height="1.9" fill="#14b4e4"/><path d="M6.6 3.3 C6.3 4.5 5.6 6.6 5.2 7.6 C4.9 8.5 4.6 9.4 4.4 9.9" fill="none" stroke="#111" stroke-width="1.15"/></svg></span><span class="ft">nullsub_70</span></div>
<div class="fr" style="top:77.34px"><span class="fi"><svg width="11" height="11" viewBox="0 0 11 11"><rect x="0.4" y="0.4" width="10.2" height="10.2" fill="#fafafa" stroke="#8a8a8a" stroke-width="0.8"/><rect x="0.4" y="0.4" width="10.2" height="1.9" fill="#14b4e4"/><path d="M6.6 3.3 C6.3 4.5 5.6 6.6 5.2 7.6 C4.9 8.5 4.6 9.4 4.4 9.9" fill="none" stroke="#111" stroke-width="1.15"/></svg></span><span class="ft b">operator delete(void *)</span></div>
<div class="fr" style="top:89.83px"><span class="fi"><svg width="11" height="11" viewBox="0 0 11 11"><rect x="0.4" y="0.4" width="10.2" height="10.2" fill="#fafafa" stroke="#8a8a8a" stroke-width="0.8"/><rect x="0.4" y="0.4" width="10.2" height="1.9" fill="#14b4e4"/><path d="M6.6 3.3 C6.3 4.5 5.6 6.6 5.2 7.6 C4.9 8.5 4.6 9.4 4.4 9.9" fill="none" stroke="#111" stroke-width="1.15"/></svg></span><span class="ft">sub_100027B20</span></div>
<div class="fr" style="top:102.32px"><span class="fi"><svg width="11" height="11" viewBox="0 0 11 11"><rect x="0.4" y="0.4" width="10.2" height="10.2" fill="#fafafa" stroke="#8a8a8a" stroke-width="0.8"/><rect x="0.4" y="0.4" width="10.2" height="1.9" fill="#14b4e4"/><path d="M6.6 3.3 C6.3 4.5 5.6 6.6 5.2 7.6 C4.9 8.5 4.6 9.4 4.4 9.9" fill="none" stroke="#111" stroke-width="1.15"/></svg></span><span class="ft">sub_100027B54</span></div>
<div class="fr" style="top:114.81px"><span class="fi"><svg width="11" height="11" viewBox="0 0 11 11"><rect x="0.4" y="0.4" width="10.2" height="10.2" fill="#fafafa" stroke="#8a8a8a" stroke-width="0.8"/><rect x="0.4" y="0.4" width="10.2" height="1.9" fill="#14b4e4"/><path d="M6.6 3.3 C6.3 4.5 5.6 6.6 5.2 7.6 C4.9 8.5 4.6 9.4 4.4 9.9" fill="none" stroke="#111" stroke-width="1.15"/></svg></span><span class="ft">nullsub_71</span></div>
<div class="fr" style="top:127.30px"><span class="fi"><svg width="11" height="11" viewBox="0 0 11 11"><rect x="0.4" y="0.4" width="10.2" height="10.2" fill="#fafafa" stroke="#8a8a8a" stroke-width="0.8"/><rect x="0.4" y="0.4" width="10.2" height="1.9" fill="#14b4e4"/><path d="M6.6 3.3 C6.3 4.5 5.6 6.6 5.2 7.6 C4.9 8.5 4.6 9.4 4.4 9.9" fill="none" stroke="#111" stroke-width="1.15"/></svg></span><span class="ft b">operator delete(void *)</span></div>
<div class="fr" style="top:139.79px"><span class="fi"><svg width="11" height="11" viewBox="0 0 11 11"><rect x="0.4" y="0.4" width="10.2" height="10.2" fill="#fafafa" stroke="#8a8a8a" stroke-width="0.8"/><rect x="0.4" y="0.4" width="10.2" height="1.9" fill="#14b4e4"/><path d="M6.6 3.3 C6.3 4.5 5.6 6.6 5.2 7.6 C4.9 8.5 4.6 9.4 4.4 9.9" fill="none" stroke="#111" stroke-width="1.15"/></svg></span><span class="ft">sub_100027B70</span></div>
<div class="fr" style="top:152.28px"><span class="fi"><svg width="11" height="11" viewBox="0 0 11 11"><rect x="0.4" y="0.4" width="10.2" height="10.2" fill="#fafafa" stroke="#8a8a8a" stroke-width="0.8"/><rect x="0.4" y="0.4" width="10.2" height="1.9" fill="#14b4e4"/><path d="M6.6 3.3 C6.3 4.5 5.6 6.6 5.2 7.6 C4.9 8.5 4.6 9.4 4.4 9.9" fill="none" stroke="#111" stroke-width="1.15"/></svg></span><span class="ft">sub_100027B84</span></div>
<div class="fr" style="top:164.77px"><span class="fi"><svg width="11" height="11" viewBox="0 0 11 11"><rect x="0.4" y="0.4" width="10.2" height="10.2" fill="#fafafa" stroke="#8a8a8a" stroke-width="0.8"/><rect x="0.4" y="0.4" width="10.2" height="1.9" fill="#14b4e4"/><path d="M6.6 3.3 C6.3 4.5 5.6 6.6 5.2 7.6 C4.9 8.5 4.6 9.4 4.4 9.9" fill="none" stroke="#111" stroke-width="1.15"/></svg></span><span class="ft">sub_100027BC0</span></div>
<div class="fr" style="top:177.26px"><span class="fi"><svg width="11" height="11" viewBox="0 0 11 11"><rect x="0.4" y="0.4" width="10.2" height="10.2" fill="#fafafa" stroke="#8a8a8a" stroke-width="0.8"/><rect x="0.4" y="0.4" width="10.2" height="1.9" fill="#14b4e4"/><path d="M6.6 3.3 C6.3 4.5 5.6 6.6 5.2 7.6 C4.9 8.5 4.6 9.4 4.4 9.9" fill="none" stroke="#111" stroke-width="1.15"/></svg></span><span class="ft">sub_100027BCC</span></div>
<div class="fr" style="top:189.75px"><span class="fi"><svg width="11" height="11" viewBox="0 0 11 11"><rect x="0.4" y="0.4" width="10.2" height="10.2" fill="#fafafa" stroke="#8a8a8a" stroke-width="0.8"/><rect x="0.4" y="0.4" width="10.2" height="1.9" fill="#14b4e4"/><path d="M6.6 3.3 C6.3 4.5 5.6 6.6 5.2 7.6 C4.9 8.5 4.6 9.4 4.4 9.9" fill="none" stroke="#111" stroke-width="1.15"/></svg></span><span class="ft">nullsub_72</span></div>
<div class="fr" style="top:202.24px"><span class="fi"><svg width="11" height="11" viewBox="0 0 11 11"><rect x="0.4" y="0.4" width="10.2" height="10.2" fill="#fafafa" stroke="#8a8a8a" stroke-width="0.8"/><rect x="0.4" y="0.4" width="10.2" height="1.9" fill="#14b4e4"/><path d="M6.6 3.3 C6.3 4.5 5.6 6.6 5.2 7.6 C4.9 8.5 4.6 9.4 4.4 9.9" fill="none" stroke="#111" stroke-width="1.15"/></svg></span><span class="ft b">operator delete(void *)</span></div>
<div class="fr" style="top:214.73px"><span class="fi"><svg width="11" height="11" viewBox="0 0 11 11"><rect x="0.4" y="0.4" width="10.2" height="10.2" fill="#fafafa" stroke="#8a8a8a" stroke-width="0.8"/><rect x="0.4" y="0.4" width="10.2" height="1.9" fill="#14b4e4"/><path d="M6.6 3.3 C6.3 4.5 5.6 6.6 5.2 7.6 C4.9 8.5 4.6 9.4 4.4 9.9" fill="none" stroke="#111" stroke-width="1.15"/></svg></span><span class="ft">sub_100027C90</span></div>
<div class="fr" style="top:227.22px"><span class="fi"><svg width="11" height="11" viewBox="0 0 11 11"><rect x="0.4" y="0.4" width="10.2" height="10.2" fill="#fafafa" stroke="#8a8a8a" stroke-width="0.8"/><rect x="0.4" y="0.4" width="10.2" height="1.9" fill="#14b4e4"/><path d="M6.6 3.3 C6.3 4.5 5.6 6.6 5.2 7.6 C4.9 8.5 4.6 9.4 4.4 9.9" fill="none" stroke="#111" stroke-width="1.15"/></svg></span><span class="ft">sub_100027CC4</span></div>
<div class="fr" style="top:239.71px"><span class="fi"><svg width="11" height="11" viewBox="0 0 11 11"><rect x="0.4" y="0.4" width="10.2" height="10.2" fill="#fafafa" stroke="#8a8a8a" stroke-width="0.8"/><rect x="0.4" y="0.4" width="10.2" height="1.9" fill="#14b4e4"/><path d="M6.6 3.3 C6.3 4.5 5.6 6.6 5.2 7.6 C4.9 8.5 4.6 9.4 4.4 9.9" fill="none" stroke="#111" stroke-width="1.15"/></svg></span><span class="ft">nullsub_73</span></div>
<div class="fr" style="top:252.20px"><span class="fi"><svg width="11" height="11" viewBox="0 0 11 11"><rect x="0.4" y="0.4" width="10.2" height="10.2" fill="#fafafa" stroke="#8a8a8a" stroke-width="0.8"/><rect x="0.4" y="0.4" width="10.2" height="1.9" fill="#14b4e4"/><path d="M6.6 3.3 C6.3 4.5 5.6 6.6 5.2 7.6 C4.9 8.5 4.6 9.4 4.4 9.9" fill="none" stroke="#111" stroke-width="1.15"/></svg></span><span class="ft b">operator delete(void *)</span></div>
<div class="fr" style="top:264.69px"><span class="fi"><svg width="11" height="11" viewBox="0 0 11 11"><rect x="0.4" y="0.4" width="10.2" height="10.2" fill="#fafafa" stroke="#8a8a8a" stroke-width="0.8"/><rect x="0.4" y="0.4" width="10.2" height="1.9" fill="#14b4e4"/><path d="M6.6 3.3 C6.3 4.5 5.6 6.6 5.2 7.6 C4.9 8.5 4.6 9.4 4.4 9.9" fill="none" stroke="#111" stroke-width="1.15"/></svg></span><span class="ft">sub_100027CE0</span></div>
<div class="fr" style="top:277.18px"><span class="fi"><svg width="11" height="11" viewBox="0 0 11 11"><rect x="0.4" y="0.4" width="10.2" height="10.2" fill="#fafafa" stroke="#8a8a8a" stroke-width="0.8"/><rect x="0.4" y="0.4" width="10.2" height="1.9" fill="#14b4e4"/><path d="M6.6 3.3 C6.3 4.5 5.6 6.6 5.2 7.6 C4.9 8.5 4.6 9.4 4.4 9.9" fill="none" stroke="#111" stroke-width="1.15"/></svg></span><span class="ft">sub_100027D38</span></div>
<div class="fr" style="top:289.67px"><span class="fi"><svg width="11" height="11" viewBox="0 0 11 11"><rect x="0.4" y="0.4" width="10.2" height="10.2" fill="#fafafa" stroke="#8a8a8a" stroke-width="0.8"/><rect x="0.4" y="0.4" width="10.2" height="1.9" fill="#14b4e4"/><path d="M6.6 3.3 C6.3 4.5 5.6 6.6 5.2 7.6 C4.9 8.5 4.6 9.4 4.4 9.9" fill="none" stroke="#111" stroke-width="1.15"/></svg></span><span class="ft">sub_100027D74</span></div>
<div class="fr" style="top:302.16px"><span class="fi"><svg width="11" height="11" viewBox="0 0 11 11"><rect x="0.4" y="0.4" width="10.2" height="10.2" fill="#fafafa" stroke="#8a8a8a" stroke-width="0.8"/><rect x="0.4" y="0.4" width="10.2" height="1.9" fill="#14b4e4"/><path d="M6.6 3.3 C6.3 4.5 5.6 6.6 5.2 7.6 C4.9 8.5 4.6 9.4 4.4 9.9" fill="none" stroke="#111" stroke-width="1.15"/></svg></span><span class="ft">nullsub_74</span></div>
<div class="fr" style="top:314.65px"><span class="fi"><svg width="11" height="11" viewBox="0 0 11 11"><rect x="0.4" y="0.4" width="10.2" height="10.2" fill="#fafafa" stroke="#8a8a8a" stroke-width="0.8"/><rect x="0.4" y="0.4" width="10.2" height="1.9" fill="#14b4e4"/><path d="M6.6 3.3 C6.3 4.5 5.6 6.6 5.2 7.6 C4.9 8.5 4.6 9.4 4.4 9.9" fill="none" stroke="#111" stroke-width="1.15"/></svg></span><span class="ft b">operator delete(void *)</span></div>
<div class="fr" style="top:327.14px"><span class="fi"><svg width="11" height="11" viewBox="0 0 11 11"><rect x="0.4" y="0.4" width="10.2" height="10.2" fill="#fafafa" stroke="#8a8a8a" stroke-width="0.8"/><rect x="0.4" y="0.4" width="10.2" height="1.9" fill="#14b4e4"/><path d="M6.6 3.3 C6.3 4.5 5.6 6.6 5.2 7.6 C4.9 8.5 4.6 9.4 4.4 9.9" fill="none" stroke="#111" stroke-width="1.15"/></svg></span><span class="ft">sub_100027D88</span></div>
<div class="fr" style="top:339.63px"><span class="fi"><svg width="11" height="11" viewBox="0 0 11 11"><rect x="0.4" y="0.4" width="10.2" height="10.2" fill="#fafafa" stroke="#8a8a8a" stroke-width="0.8"/><rect x="0.4" y="0.4" width="10.2" height="1.9" fill="#14b4e4"/><path d="M6.6 3.3 C6.3 4.5 5.6 6.6 5.2 7.6 C4.9 8.5 4.6 9.4 4.4 9.9" fill="none" stroke="#111" stroke-width="1.15"/></svg></span><span class="ft">sub_100027DBC</span></div>
<div class="fr" style="top:352.12px"><span class="fi"><svg width="11" height="11" viewBox="0 0 11 11"><rect x="0.4" y="0.4" width="10.2" height="10.2" fill="#fafafa" stroke="#8a8a8a" stroke-width="0.8"/><rect x="0.4" y="0.4" width="10.2" height="1.9" fill="#14b4e4"/><path d="M6.6 3.3 C6.3 4.5 5.6 6.6 5.2 7.6 C4.9 8.5 4.6 9.4 4.4 9.9" fill="none" stroke="#111" stroke-width="1.15"/></svg></span><span class="ft">nullsub_75</span></div>
<div class="fr" style="top:364.61px"><span class="fi"><svg width="11" height="11" viewBox="0 0 11 11"><rect x="0.4" y="0.4" width="10.2" height="10.2" fill="#fafafa" stroke="#8a8a8a" stroke-width="0.8"/><rect x="0.4" y="0.4" width="10.2" height="1.9" fill="#14b4e4"/><path d="M6.6 3.3 C6.3 4.5 5.6 6.6 5.2 7.6 C4.9 8.5 4.6 9.4 4.4 9.9" fill="none" stroke="#111" stroke-width="1.15"/></svg></span><span class="ft b">operator delete(void *)</span></div>
<div class="fr" style="top:377.10px"><span class="fi"><svg width="11" height="11" viewBox="0 0 11 11"><rect x="0.4" y="0.4" width="10.2" height="10.2" fill="#fafafa" stroke="#8a8a8a" stroke-width="0.8"/><rect x="0.4" y="0.4" width="10.2" height="1.9" fill="#14b4e4"/><path d="M6.6 3.3 C6.3 4.5 5.6 6.6 5.2 7.6 C4.9 8.5 4.6 9.4 4.4 9.9" fill="none" stroke="#111" stroke-width="1.15"/></svg></span><span class="ft">sub_100027DD8</span></div>
<div class="fr" style="top:389.59px"><span class="fi"><svg width="11" height="11" viewBox="0 0 11 11"><rect x="0.4" y="0.4" width="10.2" height="10.2" fill="#fafafa" stroke="#8a8a8a" stroke-width="0.8"/><rect x="0.4" y="0.4" width="10.2" height="1.9" fill="#14b4e4"/><path d="M6.6 3.3 C6.3 4.5 5.6 6.6 5.2 7.6 C4.9 8.5 4.6 9.4 4.4 9.9" fill="none" stroke="#111" stroke-width="1.15"/></svg></span><span class="ft">sub_100027DF0</span></div>
<div class="fr" style="top:402.08px"><span class="fi"><svg width="11" height="11" viewBox="0 0 11 11"><rect x="0.4" y="0.4" width="10.2" height="10.2" fill="#fafafa" stroke="#8a8a8a" stroke-width="0.8"/><rect x="0.4" y="0.4" width="10.2" height="1.9" fill="#14b4e4"/><path d="M6.6 3.3 C6.3 4.5 5.6 6.6 5.2 7.6 C4.9 8.5 4.6 9.4 4.4 9.9" fill="none" stroke="#111" stroke-width="1.15"/></svg></span><span class="ft">sub_100027E2C</span></div>
<div class="fr" style="top:414.57px"><span class="fi"><svg width="11" height="11" viewBox="0 0 11 11"><rect x="0.4" y="0.4" width="10.2" height="10.2" fill="#fafafa" stroke="#8a8a8a" stroke-width="0.8"/><rect x="0.4" y="0.4" width="10.2" height="1.9" fill="#14b4e4"/><path d="M6.6 3.3 C6.3 4.5 5.6 6.6 5.2 7.6 C4.9 8.5 4.6 9.4 4.4 9.9" fill="none" stroke="#111" stroke-width="1.15"/></svg></span><span class="ft">sub_100027E38</span></div>
<div class="fr" style="top:427.06px"><span class="fi"><svg width="11" height="11" viewBox="0 0 11 11"><rect x="0.4" y="0.4" width="10.2" height="10.2" fill="#fafafa" stroke="#8a8a8a" stroke-width="0.8"/><rect x="0.4" y="0.4" width="10.2" height="1.9" fill="#14b4e4"/><path d="M6.6 3.3 C6.3 4.5 5.6 6.6 5.2 7.6 C4.9 8.5 4.6 9.4 4.4 9.9" fill="none" stroke="#111" stroke-width="1.15"/></svg></span><span class="ft">sub_100027F94</span></div>
<div class="fr" style="top:439.55px"><span class="fi"><svg width="11" height="11" viewBox="0 0 11 11"><rect x="0.4" y="0.4" width="10.2" height="10.2" fill="#fafafa" stroke="#8a8a8a" stroke-width="0.8"/><rect x="0.4" y="0.4" width="10.2" height="1.9" fill="#14b4e4"/><path d="M6.6 3.3 C6.3 4.5 5.6 6.6 5.2 7.6 C4.9 8.5 4.6 9.4 4.4 9.9" fill="none" stroke="#111" stroke-width="1.15"/></svg></span><span class="ft">sub_100028030</span></div>
<div class="fr" style="top:452.04px"><span class="fi"><svg width="11" height="11" viewBox="0 0 11 11"><rect x="0.4" y="0.4" width="10.2" height="10.2" fill="#fafafa" stroke="#8a8a8a" stroke-width="0.8"/><rect x="0.4" y="0.4" width="10.2" height="1.9" fill="#14b4e4"/><path d="M6.6 3.3 C6.3 4.5 5.6 6.6 5.2 7.6 C4.9 8.5 4.6 9.4 4.4 9.9" fill="none" stroke="#111" stroke-width="1.15"/></svg></span><span class="ft">sub_100028080</span></div>
</div>
<div class="abs" style="left:0;top:575px;width:238.5px;height:1px;background:#d4d4d4"></div>
<div class="abs" style="left:0;top:578px;width:238.5px;height:1px;background:#bebebe"></div>
<div class="abs" style="left:4.7px;top:582px;font-size:9.5px;line-height:11px;color:#222">Line 55338 of 59553, /_write</div>
<div class="abs" style="left:241.7px;top:84.9px;width:957.5px;height:13.6px;background:linear-gradient(90deg,#ececec 2.3px,#fff 2.3px);border-bottom:1px solid #cacaca"></div>
<div class="abs" style="left:244px;top:84.3px;width:157.7px;height:13.9px;background:linear-gradient(#3391ff,#0c7af7);border-radius:3.5px 0 0 3.5px"></div>
<div class="abs" style="left:271.5px;top:85.0px;width:120px;text-align:center;font-size:9.1px;line-height:13px;color:#fff">IDA View-A</div>
<div class="abs" style="left:431.2px;top:85.0px;width:120px;text-align:center;font-size:9.1px;line-height:13px;color:#222">Strings</div>
<div class="abs" style="left:590.6px;top:85.0px;width:120px;text-align:center;font-size:9.1px;line-height:13px;color:#222">Hex View-1</div>
<div class="abs" style="left:750px;top:85.0px;width:120px;text-align:center;font-size:9.1px;line-height:13px;color:#222">Local Types</div>
<div class="abs" style="left:909.8px;top:85.0px;width:120px;text-align:center;font-size:9.1px;line-height:13px;color:#222">Imports</div>
<div class="abs" style="left:1069.5px;top:85.0px;width:120px;text-align:center;font-size:9.1px;line-height:13px;color:#222">Exports</div>
<svg class="abs" style="left:0;top:0" width="1200" height="100"><path d="M247.4 89.3 L252.6 94.5 M252.6 89.3 L247.4 94.5" stroke="#fff" stroke-width="0.9"/><path d="M407.4 89.3 L412.6 94.5 M412.6 89.3 L407.4 94.5" stroke="#7a7a7a" stroke-width="0.9"/><path d="M566.9 89.3 L572.1 94.5 M572.1 89.3 L566.9 94.5" stroke="#7a7a7a" stroke-width="0.9"/><rect x="560.3" y="85" width="1" height="13" fill="#e2e2e2"/><path d="M726.15 89.3 L731.35 94.5 M731.35 89.3 L726.15 94.5" stroke="#7a7a7a" stroke-width="0.9"/><rect x="719.5" y="85" width="1" height="13" fill="#e2e2e2"/><path d="M886.15 89.3 L891.35 94.5 M891.35 89.3 L886.15 94.5" stroke="#7a7a7a" stroke-width="0.9"/><rect x="879.0" y="85" width="1" height="13" fill="#e2e2e2"/><path d="M1045.4 89.3 L1050.6 94.5 M1050.6 89.3 L1045.4 94.5" stroke="#7a7a7a" stroke-width="0.9"/><rect x="1038.5" y="85" width="1" height="13" fill="#e2e2e2"/><rect x="263.2" y="85.4" width="9.8" height="10.6" fill="#c4b8ae" stroke="#1a5aa8" stroke-width="0.5"/><rect x="263.2" y="85.6" width="9.8" height="2.4" fill="#12d6ff"/><rect x="264.6" y="88.6" width="7.4" height="6.6" fill="#e4e6ea"/><rect x="265.6" y="89" width="1.4" height="6" fill="#9cc4e4"/><path d="M268 89.6 h3.2 M268 93.6 h3.2" stroke="#888" stroke-width="0.8"/><rect x="268" y="90.8" width="3.2" height="1.8" fill="#555"/><rect x="422.9" y="85.6" width="10.2" height="10.4" fill="#58d8a0" stroke="#555" stroke-width="0.6"/><rect x="422.9" y="85.6" width="10.2" height="1.8" fill="#1ab0e8"/><path d="M425.8 90.2 h1.6 v1.6 l-0.8 1 M428.6 90.2 h1.6 v1.6 l-0.8 1" stroke="#1a4a2a" stroke-width="0.8" fill="none"/><rect x="582.4" y="85.6" width="10.2" height="10.4" fill="#fff" stroke="#555" stroke-width="0.6"/><rect x="582.4" y="85.6" width="10.2" height="1.8" fill="#1ab0e8"/><circle cx="587.5" cy="91.6" r="3.2" fill="none" stroke="#333" stroke-width="0.9"/><circle cx="587.5" cy="93" r="1.8" fill="#28b860"/><rect x="741.4" y="85.6" width="10.2" height="10.4" fill="#fff" stroke="#555" stroke-width="0.6"/><rect x="741.4" y="85.6" width="10.2" height="1.8" fill="#1ab0e8"/><circle cx="746.5" cy="91.6" r="3.3" fill="#111"/><rect x="746" y="89.6" width="1" height="3.6" fill="#fff"/><rect x="901.4" y="85.6" width="10.2" height="10.4" fill="#fff" stroke="#555" stroke-width="0.6"/><rect x="901.4" y="85.6" width="10.2" height="1.8" fill="#1ab0e8"/><path d="M902.5 88.5 L905 90 L902.5 91.5z" fill="#30c070"/><path d="M905.5 89.5 h4.5 M905.5 91.5 h4.5 M905.5 93.5 h4.5 M902 94.5 h2.5" stroke="#444" stroke-width="0.7"/><rect x="1061.4" y="85.6" width="10.2" height="10.4" fill="#fff" stroke="#555" stroke-width="0.6"/><rect x="1061.4" y="85.6" width="10.2" height="1.8" fill="#1ab0e8"/><path d="M1068.5 88.5 L1071 90.4 L1068.5 92.3z" fill="#30c070"/><path d="M1062.5 89.5 h4.5 M1062.5 91.5 h4.5 M1062.5 93.5 h4.5" stroke="#444" stroke-width="0.7"/></svg>
<div class="abs" style="left:241.7px;top:99px;width:52.3px;height:499.7px;background:#fff"></div>
<div class="abs" style="left:294px;top:99px;width:3px;height:499.7px;background:#e4e4e4;border-left:0.5px solid #d8d8d8"></div>
<div class="abs" style="left:297px;top:99px;width:902px;height:485.5px;background:#fff"></div>
<div class="abs" style="left:239px;top:339.5px;width:2px;height:4px;background:#cfcfcf"></div>
<div class="abs" style="left:294.5px;top:347px;width:2px;height:4.5px;background:#cfcfcf"></div>
<div class="abs" style="left:1198.5px;top:99px;width:1px;height:499px;background:#d0d0d0"></div>
<svg class="abs" style="left:0;top:0" width="300" height="600"><circle cx="288.3" cy="100.70" r="2.2" fill="#5ccaf8"/><circle cx="288.3" cy="110.42" r="2.2" fill="#5ccaf8"/><circle cx="288.3" cy="139.58" r="2.2" fill="#5ccaf8"/><circle cx="288.3" cy="149.30" r="2.2" fill="#5ccaf8"/><circle cx="288.3" cy="159.02" r="2.2" fill="#5ccaf8"/><circle cx="288.3" cy="168.74" r="2.2" fill="#5ccaf8"/><circle cx="288.3" cy="178.46" r="2.2" fill="#5ccaf8"/><circle cx="288.3" cy="188.18" r="2.2" fill="#5ccaf8"/><circle cx="288.3" cy="197.90" r="2.2" fill="#5ccaf8"/><circle cx="288.3" cy="207.62" r="2.2" fill="#5ccaf8"/><circle cx="288.3" cy="217.34" r="2.2" fill="#5ccaf8"/><circle cx="288.3" cy="227.06" r="2.2" fill="#5ccaf8"/><circle cx="288.3" cy="236.78" r="2.2" fill="#5ccaf8"/><circle cx="288.3" cy="246.50" r="2.2" fill="#5ccaf8"/><circle cx="288.3" cy="256.22" r="2.2" fill="#5ccaf8"/><circle cx="288.3" cy="265.94" r="2.2" fill="#5ccaf8"/><circle cx="288.3" cy="275.66" r="2.2" fill="#5ccaf8"/><circle cx="288.3" cy="285.38" r="2.2" fill="#5ccaf8"/><circle cx="288.3" cy="295.10" r="2.2" fill="#5ccaf8"/><circle cx="288.3" cy="304.82" r="2.2" fill="#5ccaf8"/><circle cx="288.3" cy="314.54" r="2.2" fill="#5ccaf8"/><circle cx="288.3" cy="324.26" r="2.2" fill="#5ccaf8"/><circle cx="288.3" cy="333.98" r="2.2" fill="#5ccaf8"/><circle cx="288.3" cy="343.70" r="2.2" fill="#5ccaf8"/><circle cx="288.3" cy="353.42" r="2.2" fill="#5ccaf8"/><circle cx="288.3" cy="363.14" r="2.2" fill="#5ccaf8"/><circle cx="288.3" cy="372.86" r="2.2" fill="#5ccaf8"/><circle cx="288.3" cy="411.74" r="2.2" fill="#5ccaf8"/><circle cx="288.3" cy="421.46" r="2.2" fill="#5ccaf8"/><circle cx="288.3" cy="431.18" r="2.2" fill="#5ccaf8"/><circle cx="288.3" cy="440.90" r="2.2" fill="#5ccaf8"/><circle cx="288.3" cy="450.62" r="2.2" fill="#5ccaf8"/><circle cx="288.3" cy="479.78" r="2.2" fill="#5ccaf8"/><circle cx="288.3" cy="489.50" r="2.2" fill="#5ccaf8"/><circle cx="288.3" cy="499.22" r="2.2" fill="#5ccaf8"/><circle cx="288.3" cy="508.94" r="2.2" fill="#5ccaf8"/><circle cx="288.3" cy="518.66" r="2.2" fill="#5ccaf8"/><circle cx="288.3" cy="528.38" r="2.2" fill="#5ccaf8"/><circle cx="288.3" cy="538.10" r="2.2" fill="#5ccaf8"/><circle cx="288.3" cy="547.82" r="2.2" fill="#5ccaf8"/><path d="M278.5 99 V139.58 H282" fill="none" stroke="#111" stroke-width="0.9" stroke-dasharray="3 2.4"/><path d="M282 136.98 L285.2 139.58 L282 142.18z" fill="#111"/><path d="M289.5 329.26 H278.5 V411.74 H281.5" fill="none" stroke="#b8b8b8" stroke-width="0.9" stroke-dasharray="3 2.4"/><path d="M281 409.14 L285 411.74 L281 414.34z" fill="#b8b8b8"/><path d="M291 377.86 H267.3 V479.78 H281" fill="none" stroke="#b8b8b8" stroke-width="0.9"/><path d="M280.5 476.98 L284.6 479.78 L280.5 482.58z" fill="#b8b8b8"/><path d="M289.5 494.50 H278.5 V593" fill="none" stroke="#b8b8b8" stroke-width="0.9" stroke-dasharray="3 2.4"/><path d="M275.3 592.6 L281.7 592.6 L278.5 596.5z" fill="#b8b8b8"/><path d="M291 552.82 H267.3 V593" fill="none" stroke="#b8b8b8" stroke-width="0.9"/><path d="M264.1 592.6 L270.5 592.6 L267.3 596.5z" fill="#b8b8b8"/></svg>
<div class="abs" style="left:0;top:0;width:1200px;height:749px;overflow:hidden;clip-path:inset(99px 1px 164.5px 297px)">
<div class="hlb" style="top:137.98px"></div>
<div class="cr" style="top:99.10px"><span style="color:#000"><span class="us">__</span>text:00000001000FA580</span>                 <span style="color:#15158a">MOV</span>             <span style="color:#15158a">X2, X20</span></div>
<div class="cr" style="top:108.82px"><span style="color:#000"><span class="us">__</span>text:00000001000FA584</span>                 <span style="color:#15158a">BL</span>              <span style="color:#2a2aff">_memmove</span></div>
<div class="cr" style="top:118.54px"><span style="color:#2a2aff"><span class="us">__</span>text:00000001000FA588</span></div>
<div class="cr" style="top:128.26px"><span style="color:#2a2aff"><span class="us">__</span>text:00000001000FA588</span> <span style="color:#15158a">loc_1000FA588</span>                           <span style="color:#1a8c1a">; CODE XREF: sub_1000F8B6C+19F8↑j</span></div>
<div class="cr" style="top:137.98px"><span style="color:#2a2aff"><span class="us">__</span>text:00000001000FA588</span>                 <span style="color:#15158a">ADRL</span>            <span style="color:#15158a">X8, </span><span class="cur"></span><span class="yl" style="color:#15158a">aAuthLogin</span><span style="color:#8c8c8c"> ; "auth/login"</span></div>
<div class="cr" style="top:147.70px"><span style="color:#000"><span class="us">__</span>text:00000001000FA590</span>                 <span style="color:#15158a">ADD</span>             <span style="color:#15158a">X9, X19, X20</span></div>
<div class="cr" style="top:157.42px"><span style="color:#000"><span class="us">__</span>text:00000001000FA594</span>                 <span style="color:#15158a">LDR</span>             <span style="color:#15158a">X8, [X8]</span><span style="color:#8c8c8c"> ; &quot;auth/login&quot;</span></div>
<div class="cr" style="top:167.14px"><span style="color:#000"><span class="us">__</span>text:00000001000FA598</span>                 <span style="color:#15158a">STR</span>             <span style="color:#15158a">X8, [X9]</span></div>
<div class="cr" style="top:176.86px"><span style="color:#000"><span class="us">__</span>text:00000001000FA59C</span>                 <span style="color:#15158a">MOV</span>             <span style="color:#15158a">W8, #</span><span style="color:#1a8c1a">0x6E69</span></div>
<div class="cr" style="top:186.58px"><span style="color:#000"><span class="us">__</span>text:00000001000FA5A0</span>                 <span style="color:#15158a">STRH</span>            <span style="color:#15158a">W8, [X9,#</span><span style="color:#1a8c1a">8</span><span style="color:#15158a">]</span></div>
<div class="cr" style="top:196.30px"><span style="color:#000"><span class="us">__</span>text:00000001000FA5A4</span>                 <span style="color:#15158a">STRB</span>            <span style="color:#15158a">WZR, [X9,#</span><span style="color:#1a8c1a">0xA</span><span style="color:#15158a">]</span></div>
<div class="cr" style="top:206.02px"><span style="color:#000"><span class="us">__</span>text:00000001000FA5A8</span>                 <span style="color:#15158a">ADRP</span>            <span style="color:#15158a">X8, #qword_101359078@PAGE</span></div>
<div class="cr" style="top:215.74px"><span style="color:#000"><span class="us">__</span>text:00000001000FA5AC</span>                 <span style="color:#15158a">NOP</span>             </div>
<div class="cr" style="top:225.46px"><span style="color:#000"><span class="us">__</span>text:00000001000FA5B0</span>                 <span style="color:#15158a">LDR</span>             <span style="color:#15158a">X8, [X8,#qword_101359078@PAGEOFF]</span></div>
<div class="cr" style="top:235.18px"><span style="color:#000"><span class="us">__</span>text:00000001000FA5B4</span>                 <span style="color:#15158a">LDR</span>             <span style="color:#15158a">X0, [X8,#</span><span style="color:#1a8c1a">0x48</span><span style="color:#15158a">]</span></div>
<div class="cr" style="top:244.90px"><span style="color:#000"><span class="us">__</span>text:00000001000FA5B8</span>                 <span style="color:#15158a">LDR</span>             <span style="color:#15158a">X8, [X0]</span></div>
<div class="cr" style="top:254.62px"><span style="color:#000"><span class="us">__</span>text:00000001000FA5BC</span>                 <span style="color:#15158a">LDR</span>             <span style="color:#15158a">X8, [X8,#</span><span style="color:#1a8c1a">8</span><span style="color:#15158a">]</span></div>
<div class="cr" style="top:264.34px"><span style="color:#000"><span class="us">__</span>text:00000001000FA5C0</span>                 <span style="color:#15158a">BLR</span>             <span style="color:#15158a">X8</span></div>
<div class="cr" style="top:274.06px"><span style="color:#000"><span class="us">__</span>text:00000001000FA5C4</span>                 <span style="color:#15158a">MOV</span>             <span style="color:#15158a">W14, #</span><span style="color:#1a8c1a">0x4ADF4219</span></div>
<div class="cr" style="top:283.78px"><span style="color:#000"><span class="us">__</span>text:00000001000FA5CC</span>                 <span style="color:#15158a">MOV</span>             <span style="color:#15158a">X20, X0</span></div>
<div class="cr" style="top:293.50px"><span style="color:#000"><span class="us">__</span>text:00000001000FA5D0</span>                 <span style="color:#15158a">LDR</span>             <span style="color:#15158a">X8, [SP,#</span><span style="color:#1a8c1a">0x630+var_608</span><span style="color:#15158a">]</span></div>
<div class="cr" style="top:303.22px"><span style="color:#000"><span class="us">__</span>text:00000001000FA5D4</span>                 <span style="color:#15158a">LDP</span>             <span style="color:#15158a">X19, X21, [X8,#</span><span style="color:#1a8c1a">0x120</span><span style="color:#15158a">]</span></div>
<div class="cr" style="top:312.94px"><span style="color:#000"><span class="us">__</span>text:00000001000FA5D8</span>                 <span style="color:#15158a">LDRSB</span>           <span style="color:#15158a">W8, [SP,#</span><span style="color:#1a8c1a">0x630+var_3A9</span><span style="color:#15158a">]</span></div>
<div class="cr" style="top:322.66px"><span style="color:#000"><span class="us">__</span>text:00000001000FA5DC</span>                 <span style="color:#15158a">TBNZ</span>            <span style="color:#15158a">W8, #</span><span style="color:#1a8c1a">0x1F</span><span style="color:#15158a">, loc_1000FA5F4</span></div>
<div class="cr" style="top:332.38px"><span style="color:#000"><span class="us">__</span>text:00000001000FA5E0</span>                 <span style="color:#15158a">LDR</span>             <span style="color:#15158a">Q0, [SP,#</span><span style="color:#1a8c1a">0x630+var_3C0</span><span style="color:#15158a">]</span></div>
<div class="cr" style="top:342.10px"><span style="color:#000"><span class="us">__</span>text:00000001000FA5E4</span>                 <span style="color:#15158a">STR</span>             <span style="color:#15158a">Q0, [SP,#</span><span style="color:#1a8c1a">0x630+var_3E0</span><span style="color:#15158a">]</span></div>
<div class="cr" style="top:351.82px"><span style="color:#000"><span class="us">__</span>text:00000001000FA5E8</span>                 <span style="color:#15158a">LDR</span>             <span style="color:#15158a">X8, [SP,#</span><span style="color:#1a8c1a">0x280</span><span style="color:#15158a">]</span></div>
<div class="cr" style="top:361.54px"><span style="color:#000"><span class="us">__</span>text:00000001000FA5EC</span>                 <span style="color:#15158a">STR</span>             <span style="color:#15158a">X8, [SP,#</span><span style="color:#1a8c1a">0x630+var_3D0</span><span style="color:#15158a">]</span></div>
<div class="cr" style="top:371.26px"><span style="color:#000"><span class="us">__</span>text:00000001000FA5F0</span>                 <span style="color:#15158a">B</span>               <span style="color:#15158a">loc_1000FA60C</span></div>
<div class="cr" style="top:380.98px"><span style="color:#000"><span class="us">__</span>text:00000001000FA5F4</span><span style="color:#909090"> ; </span><svg class="dash" style="left:141.48px;top:5.02px" width="377.25" height="2"><line x1="0.45" y1="0.5" x2="377.25" y2="0.5" stroke="#9a9a9a" stroke-width="1" stroke-dasharray="4.4 0.63"/></svg></div>
<div class="cr" style="top:390.70px"><span style="color:#000"><span class="us">__</span>text:00000001000FA5F4</span></div>
<div class="cr" style="top:400.42px"><span style="color:#000"><span class="us">__</span>text:00000001000FA5F4</span> <span style="color:#15158a">loc_1000FA5F4</span>                           <span style="color:#1a8c1a">; CODE XREF: sub_1000F8B6C+1A70↑j</span></div>
<div class="cr" style="top:410.14px"><span style="color:#000"><span class="us">__</span>text:00000001000FA5F4</span>                 <span style="color:#15158a">LDR</span>             <span style="color:#15158a">X1, [SP,#</span><span style="color:#1a8c1a">0x630+var_3C0</span><span style="color:#15158a">]</span></div>
<div class="cr" style="top:419.86px"><span style="color:#000"><span class="us">__</span>text:00000001000FA5F8</span>                 <span style="color:#15158a">LDR</span>             <span style="color:#15158a">X2, [SP,#</span><span style="color:#1a8c1a">0x630+var_3C0+8</span><span style="color:#15158a">]</span></div>
<div class="cr" style="top:429.58px"><span style="color:#000"><span class="us">__</span>text:00000001000FA5FC</span>                 <span style="color:#15158a">ADD</span>             <span style="color:#15158a">X0, SP, #</span><span style="color:#1a8c1a">0x630+var_3E0</span></div>
<div class="cr" style="top:439.30px"><span style="color:#000"><span class="us">__</span>text:00000001000FA600</span>                 <span style="color:#15158a">BL</span>              <span style="color:#15158a">sub_100CA9E6C</span></div>
<div class="cr" style="top:449.02px"><span style="color:#000"><span class="us">__</span>text:00000001000FA604</span>                 <span style="color:#15158a">MOV</span>             <span style="color:#15158a">W14, #</span><span style="color:#1a8c1a">0x4ADF4219</span></div>
<div class="cr" style="top:458.74px"><span style="color:#000"><span class="us">__</span>text:00000001000FA60C</span></div>
<div class="cr" style="top:468.46px"><span style="color:#000"><span class="us">__</span>text:00000001000FA60C</span> <span style="color:#15158a">loc_1000FA60C</span>                           <span style="color:#1a8c1a">; CODE XREF: sub_1000F8B6C+1A84↑j</span></div>
<div class="cr" style="top:478.18px"><span style="color:#000"><span class="us">__</span>text:00000001000FA60C</span>                 <span style="color:#15158a">LDRSB</span>           <span style="color:#15158a">W8, [SP,#</span><span style="color:#1a8c1a">0x630+var_391</span><span style="color:#15158a">]</span></div>
<div class="cr" style="top:487.90px"><span style="color:#000"><span class="us">__</span>text:00000001000FA610</span>                 <span style="color:#15158a">TBNZ</span>            <span style="color:#15158a">W8, #</span><span style="color:#1a8c1a">0x1F</span><span style="color:#15158a">, loc_1000FA62C</span></div>
<div class="cr" style="top:497.62px"><span style="color:#000"><span class="us">__</span>text:00000001000FA614</span>                 <span style="color:#15158a">ADD</span>             <span style="color:#15158a">X8, SP, #</span><span style="color:#1a8c1a">0x630+var_3A8</span></div>
<div class="cr" style="top:507.34px"><span style="color:#000"><span class="us">__</span>text:00000001000FA618</span>                 <span style="color:#15158a">LDR</span>             <span style="color:#15158a">Q0, [X8]</span></div>
<div class="cr" style="top:517.06px"><span style="color:#000"><span class="us">__</span>text:00000001000FA61C</span>                 <span style="color:#15158a">STR</span>             <span style="color:#15158a">Q0, [SP,#</span><span style="color:#1a8c1a">0x630+var_400</span><span style="color:#15158a">]</span></div>
<div class="cr" style="top:526.78px"><span style="color:#000"><span class="us">__</span>text:00000001000FA620</span>                 <span style="color:#15158a">LDR</span>             <span style="color:#15158a">X8, [SP,#</span><span style="color:#1a8c1a">0x298</span><span style="color:#15158a">]</span></div>
<div class="cr" style="top:536.50px"><span style="color:#000"><span class="us">__</span>text:00000001000FA624</span>                 <span style="color:#15158a">STR</span>             <span style="color:#15158a">X8, [SP,#</span><span style="color:#1a8c1a">0x630+var_3F0</span><span style="color:#15158a">]</span></div>
<div class="cr" style="top:546.22px"><span style="color:#000"><span class="us">__</span>text:00000001000FA628</span>                 <span style="color:#15158a">B</span>               <span style="color:#15158a">loc_1000FA644</span></div>
<div class="cr" style="top:555.94px"><span style="color:#000"><span class="us">__</span>text:00000001000FA62C</span><span style="color:#909090"> ; </span><svg class="dash" style="left:141.48px;top:5.06px" width="377.25" height="2"><line x1="0.45" y1="0.5" x2="377.25" y2="0.5" stroke="#9a9a9a" stroke-width="1" stroke-dasharray="4.4 0.63"/></svg></div>
<div class="cr" style="top:565.66px"><span style="color:#000"><span class="us">__</span>text:00000001000FA62C</span></div>
<div class="cr" style="top:575.38px"><span style="color:#000"><span class="us">__</span>text:00000001000FA62C</span> <span style="color:#15158a">loc_1000FA62C</span>                           <span style="color:#1a8c1a">; CODE XREF: sub_1000F8B6C+1AA4↑j</span></div>
</div>
<div class="abs" style="left:296.8px;top:583.8px;width:902.4px;height:14.9px;background:#ebebeb;border-top:1px solid #c9c9c9;border-bottom:1px solid #d2d2d2"></div>
<div class="abs mono" style="left:299px;top:588.2px;font-size:9.8px;letter-spacing:-0.5px;line-height:10px;white-space:pre;color:#000;-webkit-text-stroke:0.3px #000">000FA588 00000001000FA588: sub_1000F8B6C:loc_1000FA588 (Synchronized with Hex View-1)</div>
<div class="abs" style="left:0;top:601px;width:1200px;height:21px;background:#ececec;border-top:1px solid #d0d0d0;border-bottom:1px solid #cfcfcf"></div>
<svg class="abs" style="left:3px;top:606px" width="12" height="12" viewBox="0 0 12 12"><rect x="0.4" y="0.4" width="10.8" height="10.8" fill="#c8c8c8" stroke="#666" stroke-width="0.7"/><rect x="0.4" y="0.4" width="10.8" height="1.7" fill="#1ab0e8"/><path d="M2.5 4.5 h6.5 M2.5 6.5 h6.5 M2.5 8.5 h6.5 M4.5 3.5 v6.5" stroke="#888" stroke-width="0.6"/></svg>
<div class="abs" style="left:19.6px;top:605.3px;font-size:9.4px;line-height:11px;color:#111">Output</div>
<svg class="abs" style="left:0;top:0" width="1200" height="630"><rect x="1143.8999999999999" y="608.1" width="10" height="9.8" fill="none" stroke="#333" stroke-width="1.1"/><rect x="1143.8999999999999" y="608.1" width="10" height="2" fill="#333"/><circle cx="1169.4" cy="612.8" r="4.7" fill="#5e5e5e"/><rect x="1168.2" y="610.1999999999999" width="3.6" height="3" fill="none" stroke="#ddd" stroke-width="0.7"/><rect x="1166.8000000000002" y="611.5999999999999" width="3.6" height="3" fill="#5e5e5e" stroke="#ddd" stroke-width="0.7"/><circle cx="1190.2" cy="612.8" r="4.7" fill="#5e5e5e"/><path d="M1188.2 610.8 L1192.2 614.8 M1192.2 610.8 L1188.2 614.8" stroke="#eee" stroke-width="1.3"/></svg>
<div class="abs" style="left:0;top:623.5px;width:1199px;height:83.3px;background:#fff;overflow:hidden;border-left:1px solid #d8d8d8;border-right:1px solid #c8c8c8;border-bottom:1px solid #cfcfcf">
<div class="ol" style="top:-4.00px">SWIFT: 100F383D0: could not set the function type because its return type &#x27;Swift.AnyObject?&#x27; has a bad value type</div>
<div class="ol" style="top:5.72px">SWIFT: 100F38408: could not set the function type because its return type &#x27;Swift.Hasher&#x27; is unknown</div>
<div class="ol" style="top:15.44px">SWIFT: 100F3845C: could not set the function type with an argument of the unknown type &#x27;Any.Type&#x27;</div>
<div class="ol" style="top:25.16px">IDA is analysing the input file...</div>
<div class="ol" style="top:34.88px">You may start to explore the input file right now.</div>
<svg class="odash" style="top:48.50px" width="402.40" height="2"><line x1="0.45" y1="0.5" x2="402.40" y2="0.5" stroke="#222" stroke-width="1" stroke-dasharray="4.4 0.63"/></svg>
<div class="ol" style="top:54.32px">Python 3.13.3 (main, Apr  8 2025, 13:54:08) [Clang 17.0.0 (clang-1700.0.13.3)]</div>
<div class="ol" style="top:64.04px">IDAPython 64-bit v9.2.0 (c) The IDAPython Team &lt;idapython@googlegroups.com&gt;</div>
<svg class="odash" style="top:77.50px" width="402.40" height="2"><line x1="0.45" y1="0.5" x2="402.40" y2="0.5" stroke="#222" stroke-width="1" stroke-dasharray="4.4 0.63"/></svg>
</div>
<div class="abs" style="left:2px;top:711px;width:46px;height:14px;background:#fff;border-radius:3px;box-shadow:0 0.5px 0.5px #c8c8c8;font-size:9.2px;line-height:14px;text-align:center;color:#222">Python</div>
<div class="abs" style="left:51.5px;top:710.8px;width:1147px;height:14px;background:#fff;border-bottom:1px solid #c8c8c8;border-right:1px solid #e0e0e0"></div>
<div class="abs" style="left:0;top:729.8px;width:1200px;height:1px;background:#c4c4c4"></div>
<div class="abs mono" style="left:1.5px;top:734.6px;font-size:9.4px;letter-spacing:-0.28px;line-height:11px;white-space:pre;color:#111">AC:0000000100168121 Down      Disk: 369GB</div>
</div></body></html>
